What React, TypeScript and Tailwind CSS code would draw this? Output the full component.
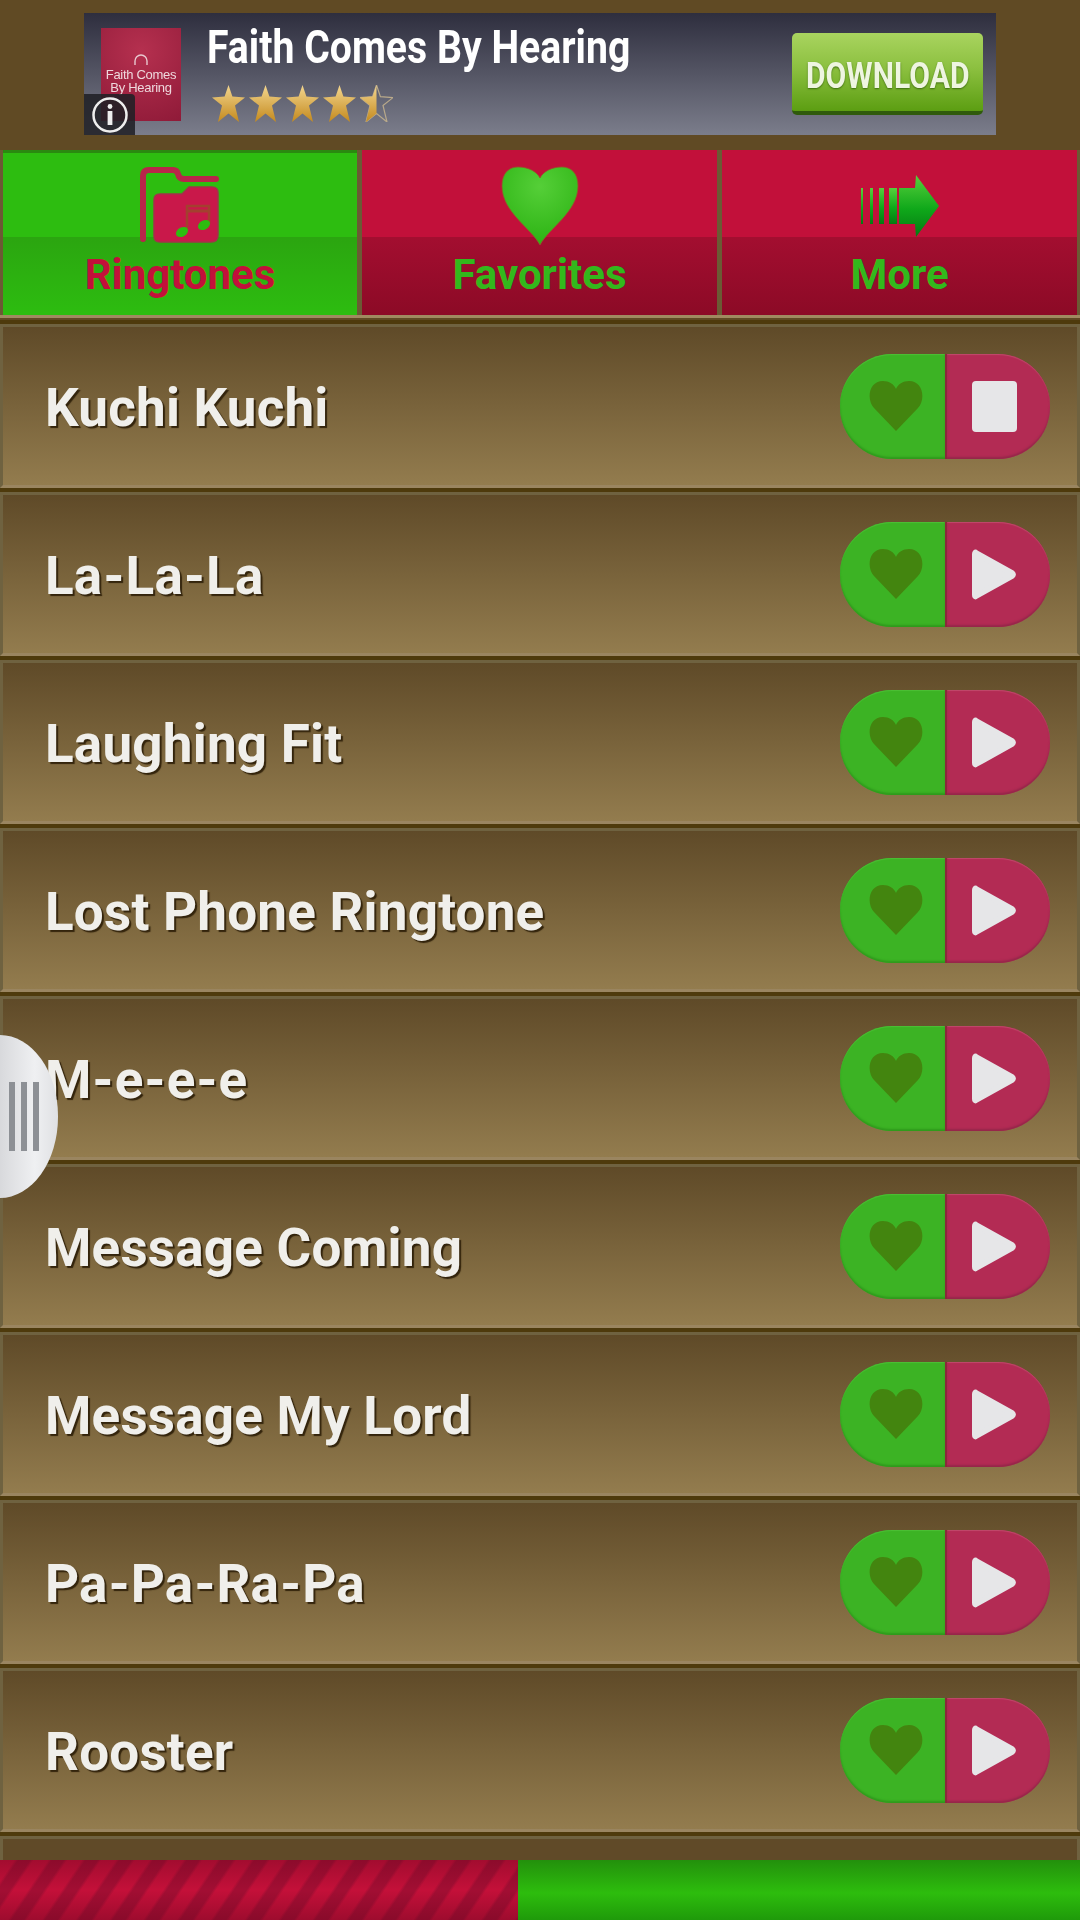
import React from "react";

const names = ["Kuchi Kuchi", "La-La-La", "Laughing Fit", "Lost Phone Ringtone", "M-e-e-e", "Message Coming", "Message My Lord", "Pa-Pa-Ra-Pa", "Rooster"];
const roboto = "font-['Roboto',sans-serif]";
const STAR = "M16.5 0 L20.4 11.6 L33 12.6 L23 20.5 L27 37 L16.5 28.5 L6 37 L10 20.5 L0 12.6 L12.6 11.6 Z";

function Star({ half = false }: { half?: boolean }) {
  return (
    <svg width="33" height="37" viewBox="0 0 33 37">
      <defs>
        <linearGradient id={half ? "sgh" : "sg"} x1="0" y1="0" x2="0" y2="1">
          <stop offset="0" stopColor="#f3d68f" />
          <stop offset="1" stopColor="#c48a1e" />
        </linearGradient>
        <clipPath id="lefthalf"><rect x="0" y="0" width="16.5" height="37" /></clipPath>
      </defs>
      {half && <path d={STAR} fill="none" stroke="#b9a98a" strokeWidth="1.2" />}
      <path d={STAR} fill={`url(#${half ? "sgh" : "sg"})`} clipPath={half ? "url(#lefthalf)" : undefined} />
    </svg>
  );
}

function Ad() {
  return (
    <div className="h-[150px] pt-[13px] px-[84px]">
      <div className="relative h-[122px] flex items-start bg-[linear-gradient(#2e2e3e,#7b7d8b)]">
        <div className="ml-[17px] mt-[15px] w-[80px] h-[93px] flex flex-col items-center bg-[radial-gradient(circle_at_50%_25%,#b5304f,#8f1a38)] overflow-hidden">
          <svg className="mt-[24px]" width="18" height="16" viewBox="0 0 18 16" fill="none" stroke="#e8c8cf" strokeWidth="1.4">
            <path d="M3 13 V9 a6 6 0 0 1 12 0 V13" />
          </svg>
          <span className="text-[13px] leading-[13px] tracking-[-0.3px] text-[#eed7dc] font-['Liberation_Sans',sans-serif] whitespace-nowrap blur-[0.4px]">Faith Comes</span>
          <span className="text-[13px] leading-[13px] tracking-[-0.3px] text-[#eed7dc] font-['Liberation_Sans',sans-serif] whitespace-nowrap blur-[0.4px]">By Hearing</span>
        </div>
        <div className="ml-[26px] flex flex-col">
          <div className={`${roboto} mt-[14px] h-[40px] text-[46px] leading-[40px] font-bold text-white whitespace-nowrap origin-left scale-x-[0.852]`}>Faith Comes By Hearing</div>
          <div className="mt-[18px] ml-[5px] flex gap-[4px]">
            <Star /><Star /><Star /><Star /><Star half />
          </div>
        </div>
        <div className="ml-auto mr-[13px] mt-[20px] w-[191px] h-[82px] rounded-[5px] border-b-[4px] border-[#2f5a0c] bg-[linear-gradient(#a9d45f,#8cc040_45%,#5c9e12)] flex items-center justify-center pt-[8px]">
          <span className={`${roboto} text-[36px] font-bold text-[#eef5e0] whitespace-nowrap scale-x-[0.836] [text-shadow:0_1px_2px_#3d6b10]`}>DOWNLOAD</span>
        </div>
        <div className="absolute left-0 bottom-0 w-[51px] h-[41px] rounded-tr-[4px] bg-[rgba(32,32,38,0.88)] flex items-center justify-center">
          <svg width="38" height="38" viewBox="0 0 38 38">
            <circle cx="19" cy="19" r="16.5" fill="none" stroke="#eeeeee" strokeWidth="2.5" />
            <circle cx="19" cy="10.5" r="2.4" fill="#eeeeee" />
            <rect x="16.6" y="15" width="4.8" height="14" fill="#eeeeee" />
          </svg>
        </div>
      </div>
    </div>
  );
}

function FolderIcon() {
  return (
    <svg className="mt-[2px] -ml-[2px]" width="80" height="76" viewBox="0 0 80 76">
      <path d="M4 72 V9 Q4 3 10 3 H34 Q38 3 39 7 Q40 12 45 12 H77" fill="none" stroke="#b9254a" strokeWidth="6" strokeLinecap="round" />
      <path d="M15 33 Q15 27 21 27 H43 L50 20 H73 Q79 20 79 26 V68 Q79 75 72 75 H21 Q15 75 15 69 Z" fill="#c9184a" stroke="#a3324a" strokeWidth="1.5" />
      <path d="M48 62 V39 H70 V57" fill="none" stroke="#a3402f" strokeWidth="2.5" />
      <path d="M48 44 H70" stroke="#a3402f" strokeWidth="3" />
      <ellipse cx="43" cy="65" rx="6.5" ry="4.5" fill="#2dbd10" transform="rotate(-30 43 65)" />
      <ellipse cx="65" cy="58" rx="6.5" ry="4.5" fill="#2dbd10" transform="rotate(-30 65 58)" />
    </svg>
  );
}

function BigHeart() {
  return (
    <svg className="mt-[7px]" width="78" height="80" viewBox="0 0 78 80">
      <defs>
        <radialGradient id="bh" cx="0.5" cy="0.25" r="0.7">
          <stop offset="0" stopColor="#55cf38" />
          <stop offset="1" stopColor="#2fb516" />
        </radialGradient>
      </defs>
      <path d="M39 79 C30 62 1 46 1 20 C1 7 8 1 17 1 C28 1 36 6 39 12 C42 6 50 1 61 1 C70 1 77 7 77 20 C77 46 48 62 39 79 Z" fill="url(#bh)" stroke="#8f5a2a" strokeWidth="0.8" />
    </svg>
  );
}

function ArrowIcon() {
  return (
    <svg className="mt-[8px]" width="78" height="62" viewBox="0 0 78 62">
      <defs>
        <linearGradient id="ag" x1="0" y1="0" x2="0" y2="1">
          <stop offset="0" stopColor="#58cf3c" />
          <stop offset="0.55" stopColor="#0fa81a" />
          <stop offset="1" stopColor="#057a12" />
        </linearGradient>
      </defs>
      <g fill="url(#ag)">
        <rect x="0" y="13" width="2" height="36" />
        <rect x="9" y="13" width="3" height="36" />
        <rect x="18" y="13" width="5" height="36" />
        <rect x="28" y="13" width="8" height="36" />
        <path d="M38 13 H54 L55 0 L78 31 L55 62 L54 49 H38 Z" />
      </g>
    </svg>
  );
}

function Tab({ label, active, children }: { label: string; active?: boolean; children: React.ReactNode }) {
  return (
    <div className={`flex-none h-[165px] flex flex-col items-center ${active ? "w-[354px] border-t-[3px] border-[#2a8a10] bg-[linear-gradient(#2dbd10_0,#2dbd10_84px,#2ba510_84px,#2dbd10_100%)]" : "w-[355px] bg-[linear-gradient(#c2103a_0,#c2103a_87px,#a30e30_87px,#8c0a26_100%)]"}`}>
      <div className={`${active ? "h-[101px]" : "h-[104px]"} flex items-center justify-center`}>{children}</div>
      <div className={`${roboto} text-[42px] leading-[42px] font-bold ${active ? "text-[#c2103a]" : "text-[#33b81c]"}`}>{label}</div>
    </div>
  );
}

function Tabs() {
  return (
    <div className="h-[174px] border-b-[4px] border-[#4e3a0c]">
      <div className="flex gap-[5px] pl-[3px] bg-[#6b5a34] border-b-[3px] border-[#a08a60] overflow-hidden">
        <Tab label="Ringtones" active><FolderIcon /></Tab>
        <Tab label="Favorites"><BigHeart /></Tab>
        <Tab label="More"><ArrowIcon /></Tab>
      </div>
    </div>
  );
}

function Pill({ playing }: { playing?: boolean }) {
  return (
    <div className="flex w-[210px] h-[105px] flex-none">
      <div className="w-[105px] h-full rounded-l-[52px] bg-[#3cb324] shadow-[inset_0_-2px_2px_#2f9a1c,inset_0_1px_1px_#4cbf36] flex items-center justify-center">
        <svg className="ml-[6px]" width="54" height="50" viewBox="0 0 54 50">
          <path d="M27 50 L5 27 C-3 18 0 0 14 0 C20 0 25 3 27 8 C29 3 34 0 40 0 C54 0 57 18 49 27 Z" fill="#43850f" />
        </svg>
      </div>
      <div className="w-[105px] h-full rounded-r-[52px] bg-[#b32b54] border-l-[2px] border-[#8a2a3a] shadow-[inset_0_-2px_2px_#96264a,inset_0_1px_1px_#c04a6c] flex items-center justify-start pl-[25px]">
        {playing ? (
          <div className="w-[45px] h-[51px] rounded-[4px] bg-[#e6e6e8]" />
        ) : (
          <svg width="44" height="51" viewBox="0 0 44 51">
            <path d="M4 4 L40 24 Q41.5 25.5 40 27 L4 47 Q3 48 3 46 V5 Q3 3 4 4 Z" fill="#e6e6e8" stroke="#e6e6e8" strokeWidth="6" strokeLinejoin="round" />
          </svg>
        )}
      </div>
    </div>
  );
}

function Title({ name }: { name: string }) {
  const parts = name.split("-");
  return (
    <span className={`${roboto} mt-[5px] text-[53px] leading-none font-bold tracking-[0.2px] text-[#f0efeb] [text-shadow:2px_2px_1px_#33240c]`}>
      {parts.map((p, i) => (
        <React.Fragment key={i}>
          {i > 0 && <span className="mx-[1px]">-</span>}
          {p}
        </React.Fragment>
      ))}
    </span>
  );
}

function Row({ name, playing }: { name: string; playing?: boolean }) {
  return (
    <div className="h-[168px] border-b-[4px] border-[#4e3a0c]">
      <div className="h-full flex items-center justify-between pl-[42px] pr-[27px] border-x-[3px] border-t-[3px] border-b-[3px] border-l-[#6f6240] border-r-[#6f6240] border-t-[#6f6240] border-b-[#9a8560] bg-[linear-gradient(#5f4a28,#937c4e)]">
        <Title name={name} />
        <Pill playing={playing} />
      </div>
    </div>
  );
}

export default function App() {
  return (
    <div className="relative w-[1080px] h-[1920px] overflow-hidden flex flex-col bg-[#604a24]">
      <Ad />
      <Tabs />
      <div className="flex-1 overflow-hidden">
        {names.map((n, i) => (
          <Row key={n} name={n} playing={i === 0} />
        ))}
        <div className="h-[24px] border-x-[3px] border-t-[3px] border-[#6f6240] bg-[#604a28]" />
      </div>
      <div className="h-[60px] flex-none flex">
        <div className="w-[518px] bg-[linear-gradient(rgba(100,5,30,0.35),rgba(100,5,30,0)_50%,rgba(100,5,30,0.4)),repeating-linear-gradient(124deg,#c41039_0,#c41039_12px,#a20e33_15px,#a20e33_25px,#c41039_28px)]" />
        <div className="flex-1 bg-[linear-gradient(#23900c,#2dbd0d_55%,#1f9a0a)]" />
      </div>
      <div className="absolute left-0 top-[1035px] w-[58px] h-[163px] rounded-r-[58px_81px] bg-[linear-gradient(90deg,#d8d9dc,#eff0f2_60%,#dfe0e3)] flex gap-[6px] items-center pl-[9px]">
        <div className="w-[6px] h-[69px] bg-[#8d9095]" />
        <div className="w-[6px] h-[69px] bg-[#8d9095]" />
        <div className="w-[6px] h-[69px] bg-[#8d9095]" />
      </div>
    </div>
  );
}
